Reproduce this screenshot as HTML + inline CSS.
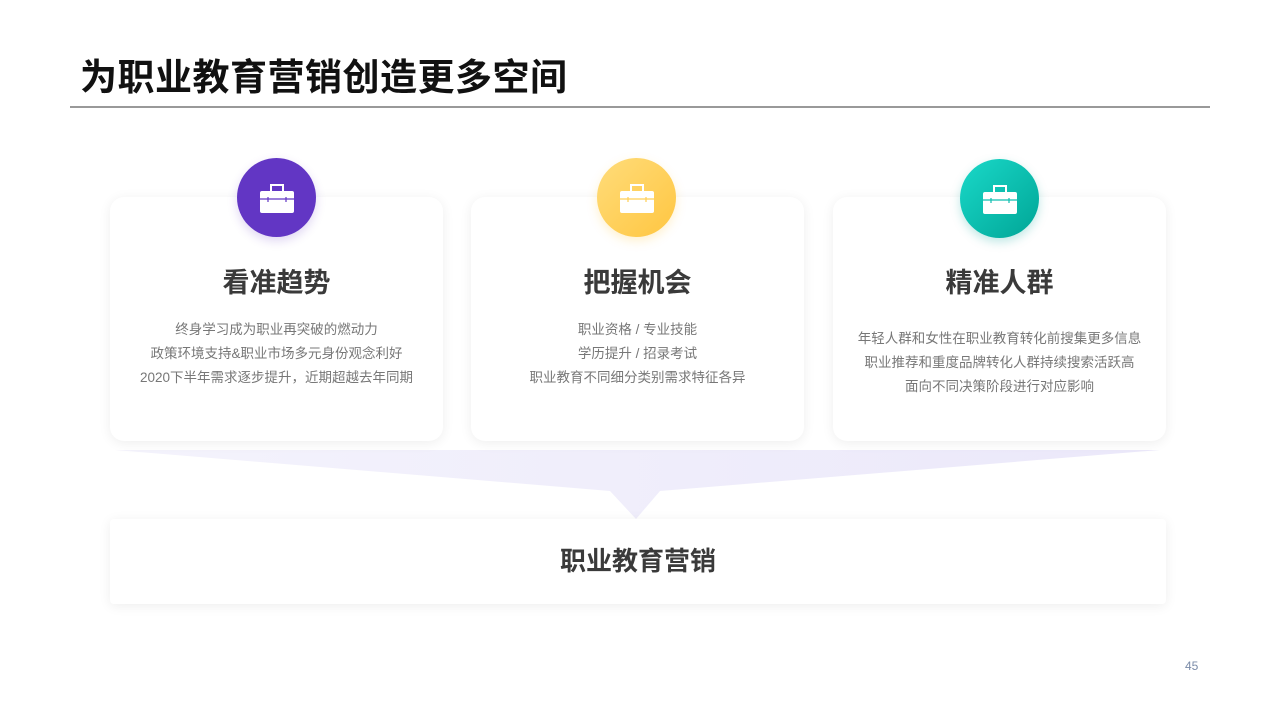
<!DOCTYPE html>
<html><head><meta charset="utf-8"><style>
*{margin:0;padding:0;box-sizing:border-box}
body{width:1280px;height:720px;background:#fff;position:relative;overflow:hidden;font-family:"Liberation Sans","Noto Sans CJK SC",sans-serif}
.h{position:absolute;left:80px;top:56px;font-size:37px;letter-spacing:0.5px;font-weight:bold;color:#111;line-height:44px}
.line{position:absolute;left:70px;top:106px;width:1140px;height:1.5px;background:#999}
.card{position:absolute;top:197px;width:333px;height:244px;background:#fff;border-radius:14px;box-shadow:0 2px 12px rgba(0,0,0,.07);text-align:center}
.card h2{position:absolute;top:68px;left:0;right:0;font-size:27px;color:#3a3a3a;line-height:36px}
.card p{position:absolute;left:0;right:0;font-size:13.5px;color:#777;line-height:24px}
.c{position:absolute;width:79px;height:79px;border-radius:50%;display:flex;align-items:center;justify-content:center}
.bot{position:absolute;left:110px;top:519px;width:1056px;height:85px;background:#fff;border-radius:4px;box-shadow:0 2px 12px rgba(0,0,0,.07);text-align:center;font-size:26px;font-weight:bold;color:#3a3a3a;line-height:85px}
.n{position:absolute;left:1185px;top:659px;font-size:12px;color:#7a8ba8}
</style></head><body>
<div class="h">为职业教育营销创造更多空间</div>
<div class="line"></div>
<svg style="position:absolute;left:0;top:0" width="1280" height="720"><defs><linearGradient id="g" x1="0" x2="1"><stop offset="0" stop-color="#f4f3fc"/><stop offset="1" stop-color="#ebe8fa"/></linearGradient></defs><polygon points="115,450 1160,450 660,491 636,519 610,491" fill="url(#g)"/></svg>
<div class="card" style="left:110px"><h2>看准趋势</h2><p style="top:121px">终身学习成为职业再突破的燃动力<br>政策环境支持&amp;职业市场多元身份观念利好<br>2020下半年需求逐步提升，近期超越去年同期</p></div>
<div class="card" style="left:471px"><h2>把握机会</h2><p style="top:121px">职业资格 / 专业技能<br>学历提升 / 招录考试<br>职业教育不同细分类别需求特征各异</p></div>
<div class="card" style="left:833px"><h2>精准人群</h2><p style="top:130px">年轻人群和女性在职业教育转化前搜集更多信息<br>职业推荐和重度品牌转化人群持续搜索活跃高<br>面向不同决策阶段进行对应影响</p></div>
<div class="c" style="left:237px;top:158px;background:#6236c4;box-shadow:0 4px 10px rgba(98,54,196,.2)"><svg width="36" height="32" viewBox="0 0 36 32"><path d="M12 9V3h12v6" fill="none" stroke="#fff" stroke-width="2"/><rect x="1" y="9" width="34" height="22" rx="2" fill="#fff"/><path d="M1 17h34M9 15v5M27 15v5" stroke="#6236c4" stroke-width="1.2"/></svg></div>
<div class="c" style="left:597px;top:158px;background:linear-gradient(135deg,#ffdc7a,#ffc641);box-shadow:0 4px 10px rgba(255,198,65,.25)"><svg width="36" height="32" viewBox="0 0 36 32"><path d="M12 9V3h12v6" fill="none" stroke="#fff" stroke-width="2"/><rect x="1" y="9" width="34" height="22" rx="2" fill="#fff"/><path d="M1 17h34M9 15v5M27 15v5" stroke="#ffcf55" stroke-width="1.2"/></svg></div>
<div class="c" style="left:960px;top:159px;background:linear-gradient(135deg,#1ad9c9,#00a596);box-shadow:0 4px 10px rgba(0,165,150,.25)"><svg width="36" height="32" viewBox="0 0 36 32"><path d="M12 9V3h12v6" fill="none" stroke="#fff" stroke-width="2"/><rect x="1" y="9" width="34" height="22" rx="2" fill="#fff"/><path d="M1 17h34M9 15v5M27 15v5" stroke="#0fbfb0" stroke-width="1.2"/></svg></div>
<div class="bot">职业教育营销</div>
<div class="n">45</div>
</body></html>
